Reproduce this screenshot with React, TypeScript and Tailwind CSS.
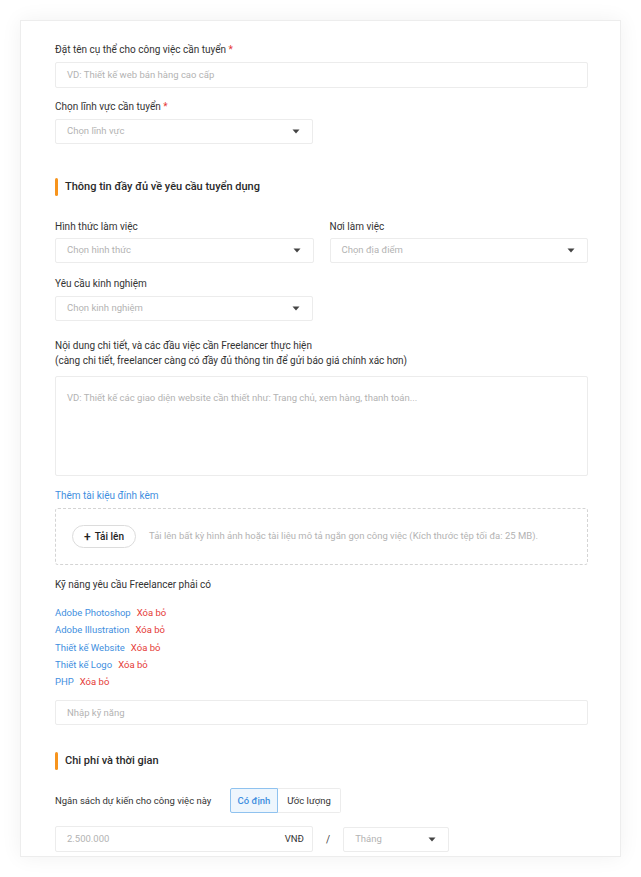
const Label = ({ children, req }: any) => (
  <p className="text-[10px] leading-[14px] text-[#333]">
    {children}
    {req && <span className="text-[#e53935]"> *</span>}
  </p>
)

const Caret = () => (
  <svg width="8" height="5" viewBox="0 0 8 5" className="text-[#444]">
    <path d="M0.5 0.5h7L4 4.5z" fill="currentColor" />
  </svg>
)

const Select = ({ children, w }: any) => (
  <div className={`flex h-[25px] items-center justify-between rounded-[2px] border border-[#ececec] bg-white pl-[11px] pr-[12px] ${w}`}>
    <span className="text-[9.5px] text-[#b3b3b3]">{children}</span>
    <Caret />
  </div>
)

const Section = ({ children }: any) => (
  <div className="flex items-center gap-[7px]">
    <div className="h-[18px] w-[3px] rounded-full bg-[#f7941d]" />
    <h2 className="text-[11px] font-medium text-[#2a2a2a]">{children}</h2>
  </div>
)

const skills = [
  'Adobe Photoshop',
  'Adobe Illustration',
  'Thiết kế Website',
  'Thiết kế Logo',
  'PHP',
]

const App = () => {
  return (
    <div className="min-h-[877px] bg-white pt-[20px] font-['Roboto',sans-serif]">
      <div className="mx-[20px] h-[837px] border border-[#ededed] bg-white pl-[34px] pr-[32px] pt-[22px] shadow-[0_0_20px_rgba(0,0,0,0.06)]">
        <Label req>Đặt tên cụ thể cho công việc cần tuyển</Label>
        <div className="mt-[5px] flex h-[26px] items-center rounded-[2px] border border-[#ececec] pl-[11px] pr-2">
          <span className="text-[9.5px] text-[#b3b3b3]">VD: Thiết kế web bán hàng cao cấp</span>
        </div>

        <div className="mt-[12px]">
          <Label req>Chọn lĩnh vực cần tuyển</Label>
        </div>
        <div className="mt-[5px]">
          <Select w="w-[258px]">Chọn lĩnh vực</Select>
        </div>

        <div className="mt-[34px]">
          <Section>Thông tin đầy đủ về yêu cầu tuyển dụng</Section>
        </div>

        <div className="mt-[24px] grid grid-cols-2 gap-x-[16px]">
          <div>
            <Label>Hình thức làm việc</Label>
            <div className="mt-[4px]">
              <Select>Chọn hình thức</Select>
            </div>
          </div>
          <div>
            <Label>Nơi làm việc</Label>
            <div className="mt-[4px]">
              <Select>Chọn địa điểm</Select>
            </div>
          </div>
        </div>

        <div className="mt-[14px]">
          <Label>Yêu cầu kinh nghiệm</Label>
        </div>
        <div className="mt-[5px]">
          <Select w="w-[258px]">Chọn kinh nghiệm</Select>
        </div>

        <div className="mt-[17px] text-[10px] leading-[15px] text-[#333]">
          <p>Nội dung chi tiết, và các đầu việc cần Freelancer thực hiện</p>
          <p>(càng chi tiết, freelancer càng có đầy đủ thông tin để gửi báo giá chính xác hơn)</p>
        </div>
        <div className="mt-[8px] h-[100px] rounded-[2px] border border-[#ececec] px-[11px] pt-[7px]">
          <span className="text-[9.5px] text-[#b3b3b3]">
            VD: Thiết kế các giao diện website cần thiết như: Trang chủ, xem hàng, thanh toán...
          </span>
        </div>

        <p className="mt-[13px] text-[10px] leading-[14px] text-[#3f8fe0]">Thêm tài kiệu đính kèm</p>
        <div className="mt-[5px] flex h-[57px] items-center gap-[13px] rounded-[3px] border border-dashed border-[#d4d4d4] pl-[16px]">
          <button className="flex h-[23px] w-[64px] items-center justify-center gap-[4px] rounded-full border border-[#dcdcdc] text-[10px] font-medium text-[#222]">
            <span className="text-[12px] leading-none">+</span>
            Tải lên
          </button>
          <span className="text-[9.5px] text-[#b3b3b3]">
            Tải lên bất kỳ hình ảnh hoặc tài liệu mô tả ngắn gọn công việc (Kích thước tệp tối đa: 25 MB).
          </span>
        </div>

        <div className="mt-[13px]">
          <Label>Kỹ năng yêu cầu Freelancer phải có</Label>
        </div>
        <div className="mt-[14px] flex flex-col gap-[3.3px]">
          {skills.map((s) => (
            <div key={s} className="flex gap-[6px] text-[9.5px] leading-[14px]">
              <span className="text-[#3f8fe0]">{s}</span>
              <span className="text-[#e53935]">Xóa bỏ</span>
            </div>
          ))}
        </div>
        <div className="mt-[11px] flex h-[25px] items-center rounded-[2px] border border-[#ececec] pl-[11px]">
          <span className="text-[9.5px] text-[#b3b3b3]">Nhập kỹ năng</span>
        </div>

        <div className="mt-[27px]">
          <Section>Chi phí và thời gian</Section>
        </div>

        <div className="mt-[18px] flex items-center">
          <p className="w-[175px] text-[9.5px] leading-[14px] text-[#333]">Ngân sách dự kiến cho công việc này</p>
          <div className="flex h-[25px] text-[9.5px]">
            <div className="flex w-[48px] items-center justify-center rounded-l-[2px] border border-[#8fc2ef] bg-[#eef6fd] font-medium text-[#3f8fe0]">
              Có định
            </div>
            <div className="flex w-[63px] items-center justify-center rounded-r-[2px] border border-l-0 border-[#ececec] text-[#333]">
              Ước lượng
            </div>
          </div>
        </div>

        <div className="mt-[13px] flex items-center">
          <div className="flex h-[26px] w-[258px] items-center justify-between rounded-[2px] border border-[#ececec] pl-[11px] pr-[8px] text-[9.5px]">
            <span className="text-[#b3b3b3]">2.500.000</span>
            <span className="text-[#333]">VNĐ</span>
          </div>
          <span className="mx-[13px] text-[10px] text-[#444]">/</span>
          <Select w="w-[106px]">Tháng</Select>
        </div>
      </div>
    </div>
  )
}

export default App
